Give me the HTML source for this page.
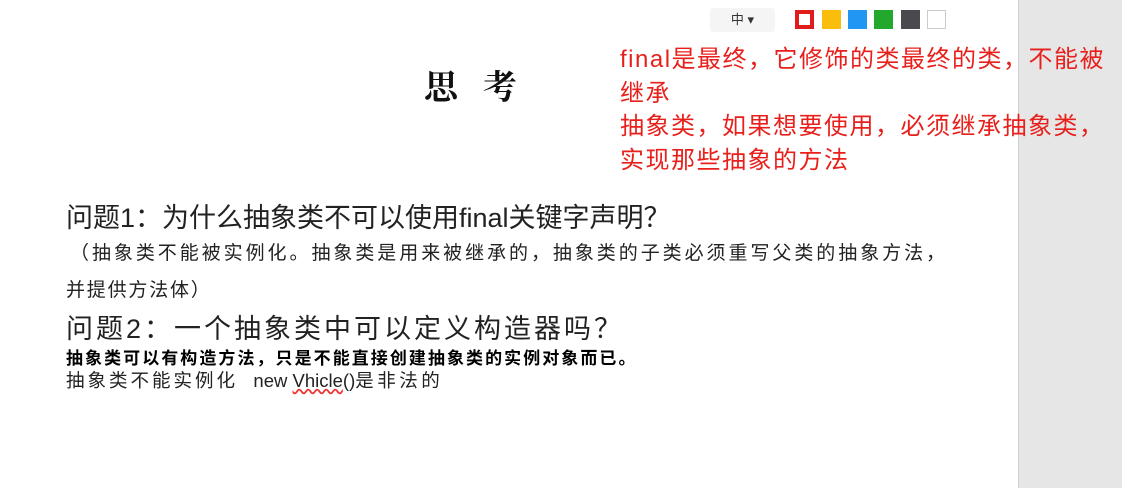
<!DOCTYPE html>
<html><head><meta charset="utf-8"><style>
body{margin:0;width:1122px;height:488px;background:#fff;position:relative;overflow:hidden;font-family:"Liberation Sans","Noto Sans CJK SC",sans-serif;color:#222}
.a{position:absolute;white-space:nowrap}
.sq{position:absolute;top:10px;width:19px;height:19px}
</style></head><body>
<div class="a" style="left:1018px;top:0;width:104px;height:488px;background:#e6e6e6;border-left:1px solid #d0d0d0"></div>
<div class="a" style="left:710px;top:8px;width:65px;height:24px;background:#f5f5f5;border-radius:3px;font-size:13px;line-height:24px;text-align:center;color:#333">中 ▾</div>
<div class="sq" style="left:795px;background:#fff;border:4px solid #e01b1b;width:11px;height:11px"></div>
<div class="sq" style="left:822px;background:#fbbd0c"></div>
<div class="sq" style="left:848px;background:#2196f3"></div>
<div class="sq" style="left:874px;background:#21a82d"></div>
<div class="sq" style="left:901px;background:#4a4a4e"></div>
<div class="sq" style="left:927px;background:#fff;border:1px solid #ccc;width:17px;height:17px"></div>
<div class="a" style="left:424px;top:60px;font-size:34px;font-weight:bold;font-family:'Noto Serif CJK SC',serif;letter-spacing:25px;color:#111">思考</div>
<div class="a" style="left:620px;top:43px;font-size:24px;line-height:33.5px;color:#e8201c;letter-spacing:1.5px">final是最终，它修饰的类最终的类，不能被<br>继承<br>抽象类，如果想要使用，必须继承抽象类，<br>实现那些抽象的方法</div>
<div class="a" style="left:66px;top:196px;font-size:27px;color:#222">问题1：为什么抽象类不可以使用final关键字声明？</div>
<div class="a" style="left:70px;top:238px;font-size:19px;color:#222;letter-spacing:2.95px">（抽象类不能被实例化。抽象类是用来被继承的，抽象类的子类必须重写父类的抽象方法，</div>
<div class="a" style="left:66px;top:275px;font-size:19px;color:#222;letter-spacing:1.8px">并提供方法体）</div>
<div class="a" style="left:66px;top:307px;font-size:27px;color:#222;letter-spacing:3px">问题2：一个抽象类中可以定义构造器吗？</div>
<div class="a" style="left:66px;top:344px;font-size:17px;color:#000;font-weight:bold;letter-spacing:2.05px">抽象类可以有构造方法，只是不能直接创建抽象类的实例对象而已。</div>
<div class="a" style="left:66px;top:367px;font-size:18.5px;color:#222"><span style="letter-spacing:3px">抽象类不能实例化</span> &nbsp; new <span style="text-decoration:underline wavy #e33">Vhicle</span>()<span style="letter-spacing:3.5px">是非法的</span></div>
</body></html>
